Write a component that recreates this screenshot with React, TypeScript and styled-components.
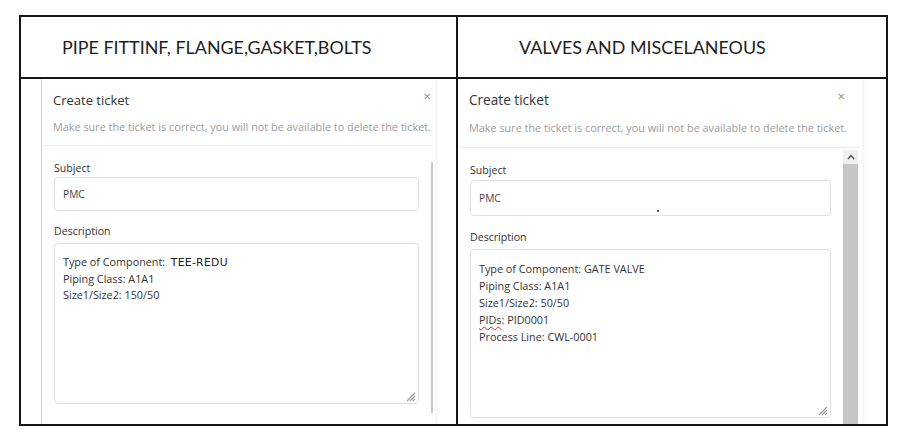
import React from 'react';
import styled, { createGlobalStyle } from 'styled-components';

const GlobalStyle = createGlobalStyle`
  html, body {
    margin: 0;
    padding: 0;
    background: #ffffff;
  }
  body {
    font-family: 'Open Sans', 'Noto Sans', sans-serif;
    color: #333;
  }
`;

interface PanelLayout {
  inset: number;
  modalWidth: number;
  padLeft: number;
  closeRight: number;
  titleTop: number;
  subGap: number;
  sepGap: number;
  labelGap: number;
  inputHeight: number;
  fieldGap: number;
  areaHeight: number;
  lineHeight: number;
  titleSize: number;
  wideBar?: boolean;
}

const leftLayout: PanelLayout = {
  inset: 20,
  modalWidth: 393,
  padLeft: 11,
  closeRight: 4,
  titleTop: 12,
  subGap: 11,
  sepGap: 11,
  labelGap: 1,
  inputHeight: 34,
  fieldGap: 12,
  areaHeight: 161,
  lineHeight: 16,
  titleSize: 13,
};

const rightLayout: PanelLayout = {
  inset: 0,
  modalWidth: 404,
  padLeft: 11,
  closeRight: 17,
  titleTop: 12,
  subGap: 12,
  sepGap: 12,
  labelGap: 2,
  inputHeight: 36,
  fieldGap: 13,
  areaHeight: 169,
  lineHeight: 17,
  titleSize: 13.6,
  wideBar: true,
};

function ResizeGrip() {
  return (
    <svg width="11" height="11" viewBox="0 0 11 11">
      <path d="M10 2 L2 10 M10 5 L5 10 M10 8 L8 10" stroke="#9a9a9a" strokeWidth="1.2" />
    </svg>
  );
}

function UpArrow() {
  return (
    <svg width="8" height="6" viewBox="0 0 8 6">
      <path d="M1 5 L4 1.5 L7 5" fill="none" stroke="#555" strokeWidth="1.4" />
    </svg>
  );
}

interface TicketProps {
  layout: PanelLayout;
  lines: React.ReactNode[];
  stray?: boolean;
}

function TicketPanel({ layout, lines, stray }: TicketProps) {
  return (
    <PanelBody $inset={layout.inset}>
      <Modal $width={layout.modalWidth} $edge={layout.inset > 0}>
        <ModalHead $padLeft={layout.padLeft} $top={layout.titleTop} $right={layout.closeRight}>
          <TitleRow>
            <Title $size={layout.titleSize}>Create ticket</Title>
            <Close>×</Close>
          </TitleRow>
          <Subtitle $gap={layout.subGap}>
            Make sure the ticket is correct, you will not be available to delete the ticket.
          </Subtitle>
        </ModalHead>
        <Separator $gap={layout.sepGap} />
        <ScrollArea>
          <Form $padLeft={layout.padLeft + 1}>
            <Label $gap={layout.labelGap}>Subject</Label>
            <Input $height={layout.inputHeight} $gap={layout.fieldGap}>
              PMC
              {stray && <StrayDot />}
            </Input>
            <Label $gap={4}>Description</Label>
            <TextArea $height={layout.areaHeight} $line={layout.lineHeight}>
              {lines.map((line, i) => (
                <div key={i}>{line}</div>
              ))}
              <Grip>
                <ResizeGrip />
              </Grip>
            </TextArea>
          </Form>
          {layout.wideBar ? (
            <ScrollTrack>
              <ArrowBox>
                <UpArrow />
              </ArrowBox>
              <Thumb />
            </ScrollTrack>
          ) : (
            <ThinBar />
          )}
        </ScrollArea>
      </Modal>
    </PanelBody>
  );
}

export default function App() {
  const leftLines = [
    <>
      Type of Component:&nbsp;&nbsp;<Pasted>TEE-REDU</Pasted>
    </>,
    'Piping Class: A1A1',
    'Size1/Size2: 150/50',
  ];
  const rightLines = [
    'Type of Component: GATE VALVE',
    'Piping Class: A1A1',
    'Size1/Size2: 50/50',
    <>
      <Misspelled>PIDs</Misspelled>: PID0001
    </>,
    'Process Line: CWL-0001',
  ];

  return (
    <Page>
      <GlobalStyle />
      <Sheet>
        <HeaderCell $padLeft={41} $divider>
          PIPE FITTINF, FLANGE,GASKET,BOLTS
        </HeaderCell>
        <HeaderCell $padLeft={61}>VALVES AND MISCELANEOUS</HeaderCell>
        <BodyCell $divider>
          <TicketPanel layout={leftLayout} lines={leftLines} />
        </BodyCell>
        <BodyCell>
          <TicketPanel layout={rightLayout} lines={rightLines} stray />
        </BodyCell>
      </Sheet>
    </Page>
  );
}

const Page = styled.div`
  width: 902px;
  height: 441px;
  box-sizing: border-box;
  padding: 15px 0 0 19px;
  background: #fff;
  overflow: hidden;
`;

const Sheet = styled.div`
  display: grid;
  grid-template-columns: 437px 428px;
  grid-template-rows: 62px 345px;
  width: 869px;
  box-sizing: border-box;
  border: 2px solid #161616;
`;

const HeaderCell = styled.div<{ $padLeft: number; $divider?: boolean }>`
  display: flex;
  align-items: center;
  padding-left: ${(p) => p.$padLeft}px;
  border-bottom: 2px solid #161616;
  border-right: ${(p) => (p.$divider ? '2px solid #161616' : 'none')};
  font-family: Lato, 'Open Sans', sans-serif;
  font-size: 17.9px;
  color: #1e1e1e;
`;

const BodyCell = styled.div<{ $divider?: boolean }>`
  border-right: ${(p) => (p.$divider ? '2px solid #161616' : 'none')};
  overflow: hidden;
`;

const PanelBody = styled.div<{ $inset: number }>`
  height: 100%;
  padding-left: ${(p) => p.$inset}px;
  display: flex;
`;

const Modal = styled.div<{ $width: number; $edge: boolean }>`
  width: ${(p) => p.$width}px;
  display: flex;
  flex-direction: column;
  background: #fff;
  border-left: ${(p) => (p.$edge ? '1px solid #d6d6d6' : 'none')};
  box-shadow: 2px 0 3px rgba(0, 0, 0, 0.05);
`;

const ModalHead = styled.div<{ $padLeft: number; $top: number; $right: number }>`
  padding: ${(p) => p.$top}px ${(p) => p.$right}px 0 ${(p) => p.$padLeft}px;
`;

const TitleRow = styled.div`
  display: flex;
  justify-content: space-between;
  align-items: flex-start;
`;

const Title = styled.div<{ $size: number }>`
  font-size: ${(p) => p.$size}px;
  color: #333;
  line-height: 18px;
`;

const Close = styled.span`
  font-size: 13px;
  line-height: 10px;
  color: #8a8a8a;
`;

const Subtitle = styled.div<{ $gap: number }>`
  margin-top: ${(p) => p.$gap}px;
  font-size: 10.85px;
  color: #9c9c9c;
  white-space: nowrap;
  line-height: 14px;
`;

const Separator = styled.div<{ $gap: number }>`
  margin: ${(p) => p.$gap}px 2px 0 2px;
  border-top: 1px solid #ececec;
`;

const ScrollArea = styled.div`
  flex: 1;
  display: flex;
  min-height: 0;
`;

const Form = styled.div<{ $padLeft: number }>`
  flex: 1;
  padding: 14px 12px 0 ${(p) => p.$padLeft}px;
`;

const Label = styled.div<{ $gap: number }>`
  font-size: 10.6px;
  color: #333;
  line-height: 16px;
  margin-bottom: ${(p) => p.$gap}px;
`;

const Input = styled.div<{ $height: number; $gap: number }>`
  position: relative;
  height: ${(p) => p.$height}px;
  box-sizing: border-box;
  border: 1px solid #e0e0e0;
  border-radius: 4px;
  padding-left: 8px;
  display: flex;
  align-items: center;
  font-size: 10.2px;
  color: #444;
  margin-bottom: ${(p) => p.$gap}px;
`;

const StrayDot = styled.span`
  position: absolute;
  left: 186px;
  bottom: 3px;
  width: 2px;
  height: 2px;
  background: #222;
  border-radius: 50%;
`;

const TextArea = styled.div<{ $height: number; $line: number }>`
  position: relative;
  height: ${(p) => p.$height}px;
  box-sizing: border-box;
  border: 1px solid #e0e0e0;
  border-radius: 4px;
  padding: 10px 8px;
  font-size: 10.8px;
  line-height: ${(p) => p.$line}px;
  color: #333;
`;

const Pasted = styled.span`
  font-family: 'DejaVu Sans', Verdana, sans-serif;
  font-size: 10.8px;
  color: #222;
  letter-spacing: 0.3px;
`;

const Misspelled = styled.span`
  text-decoration: underline wavy #d22;
  text-decoration-thickness: 1px;
  text-underline-offset: 2px;
`;

const Grip = styled.span`
  position: absolute;
  right: 2px;
  bottom: 1px;
  display: flex;
`;

const ThinBar = styled.div`
  width: 2px;
  margin: 16px 2px 11px 0;
  background: #c9c9c9;
`;

const ScrollTrack = styled.div`
  width: 15px;
  margin: 2px 4px 0 0;
  display: flex;
  flex-direction: column;
  background: #f0f0f0;
`;

const ArrowBox = styled.div`
  height: 14px;
  display: flex;
  align-items: center;
  justify-content: center;
`;

const Thumb = styled.div`
  flex: 1;
  background: #c6c6c6;
`;
